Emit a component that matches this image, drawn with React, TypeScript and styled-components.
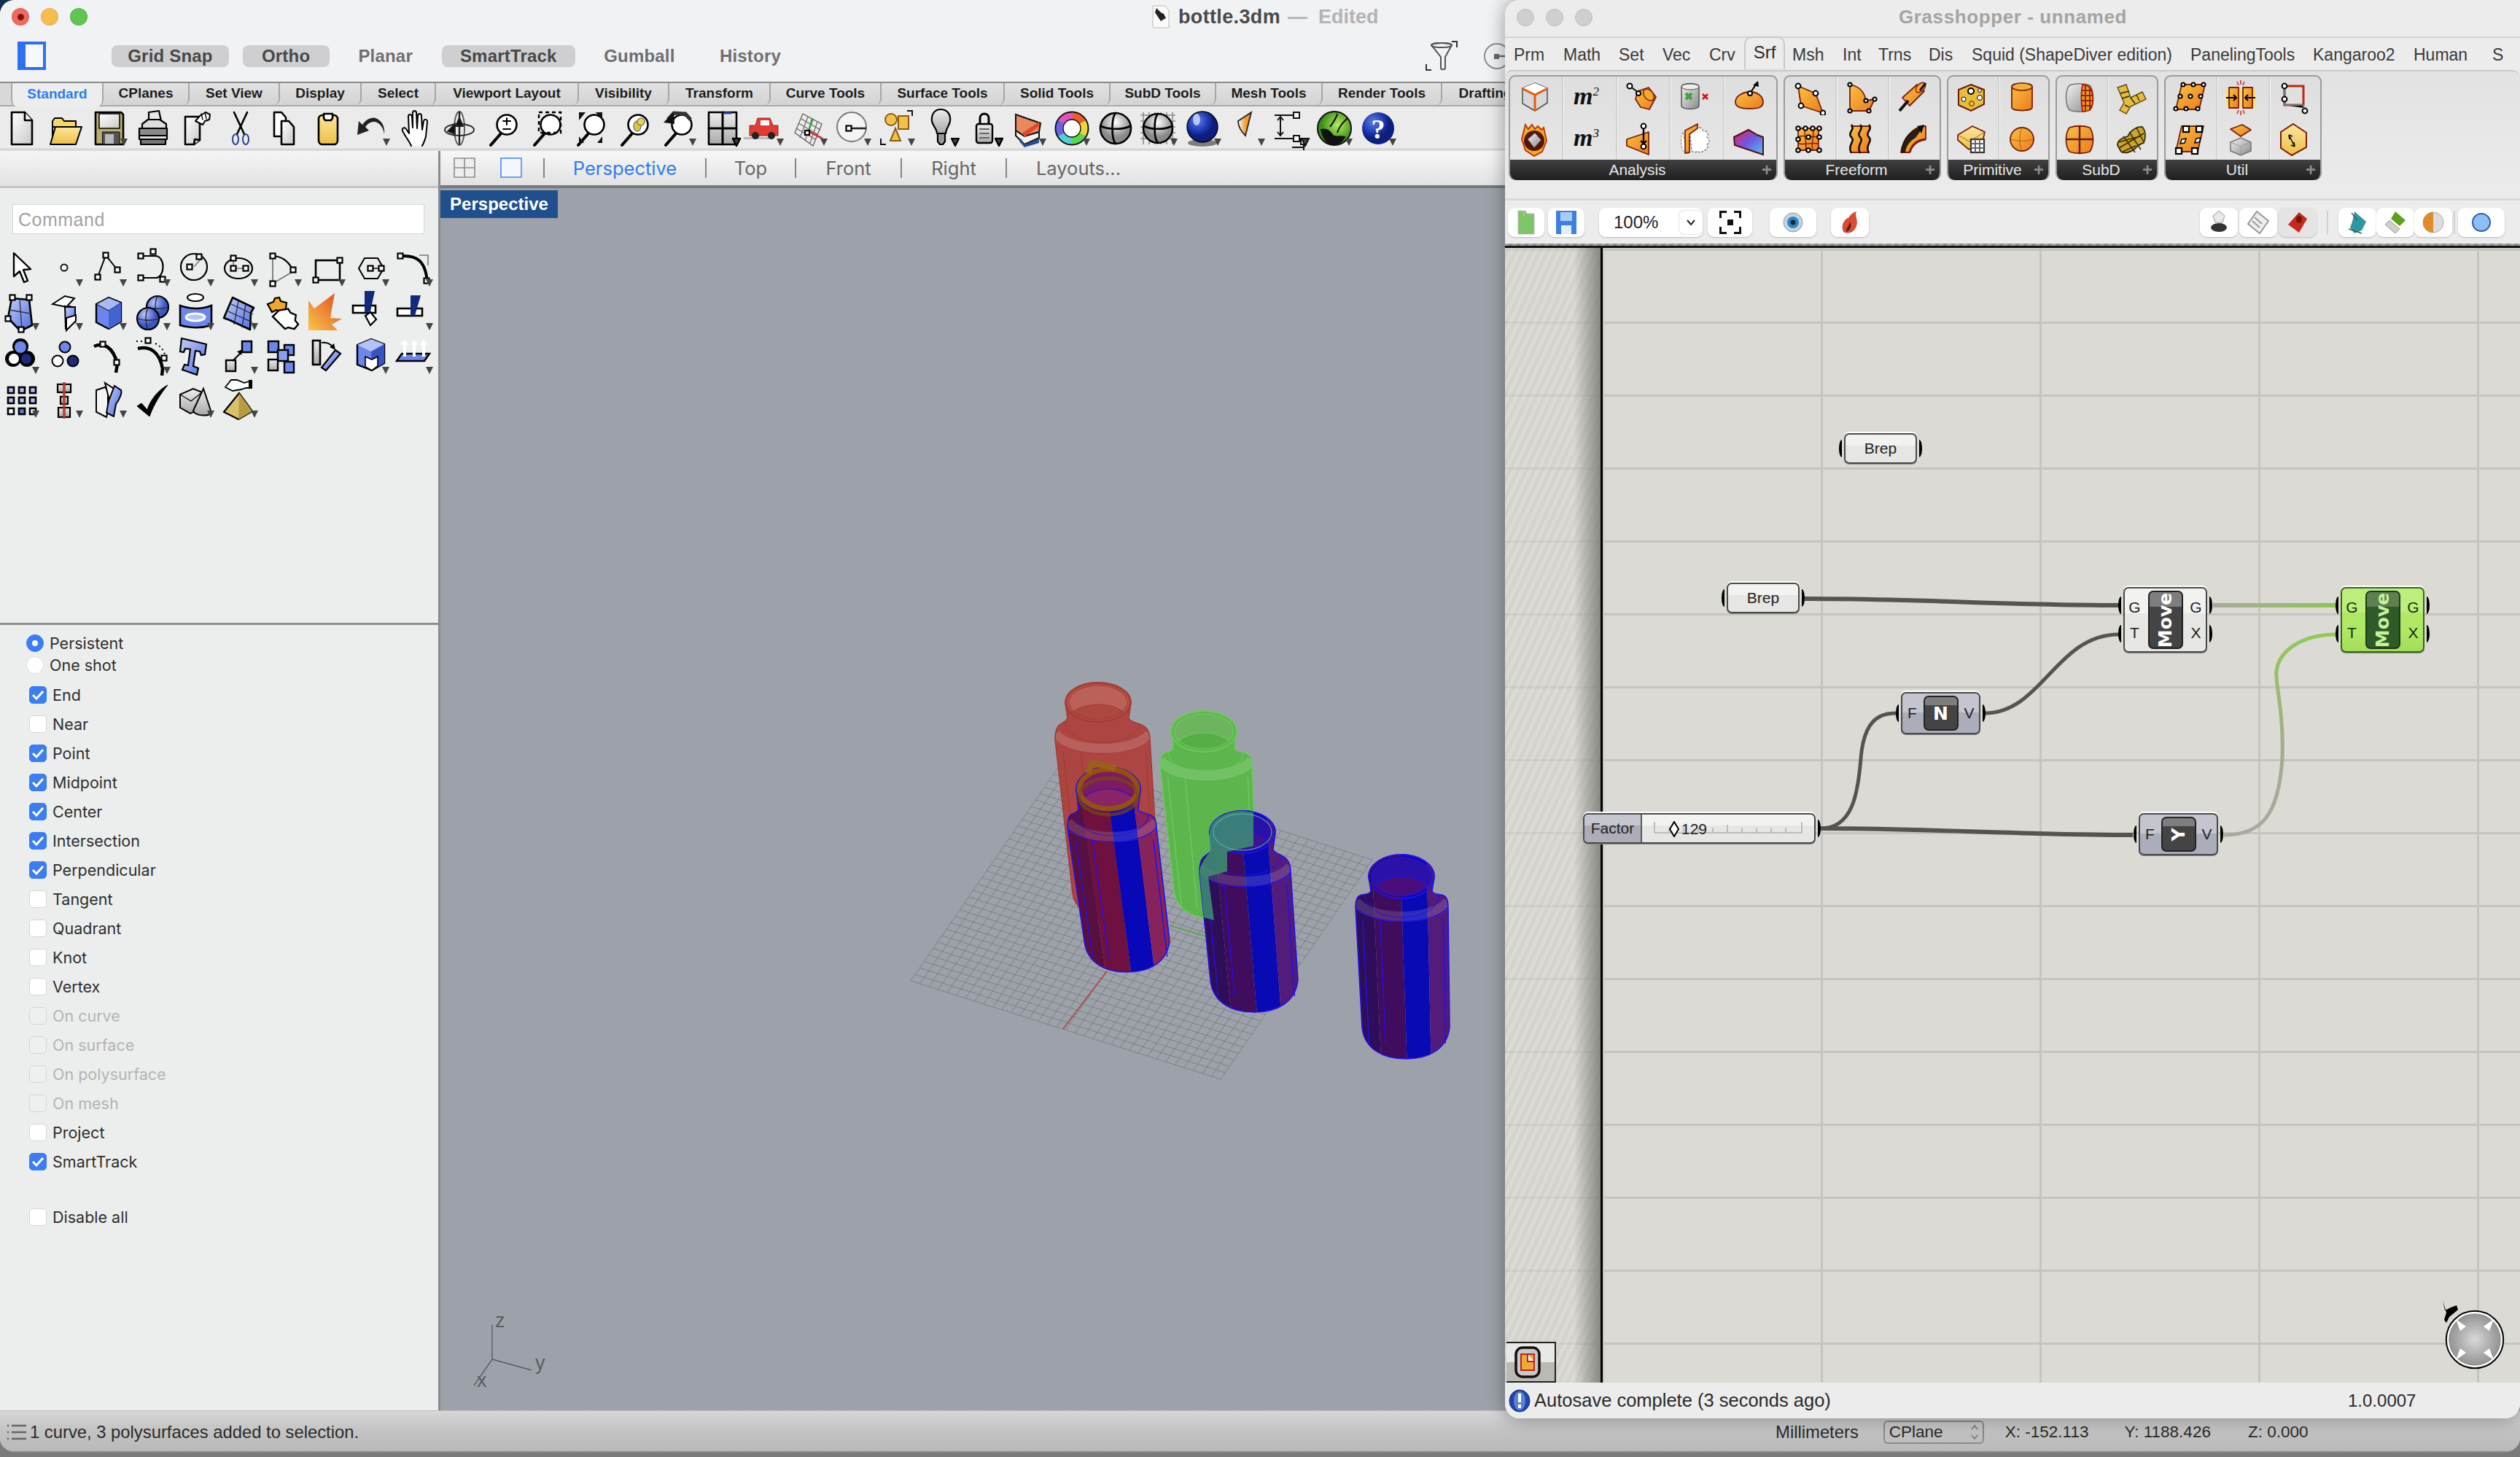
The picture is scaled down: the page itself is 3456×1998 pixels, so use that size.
import React from 'react';
import styled, { createGlobalStyle } from 'styled-components';

const Global = createGlobalStyle`
  html, body { margin: 0; padding: 0; background: #16324f; }
  #root { width: 3456px; height: 1998px; overflow: hidden; position: relative; }
  * { box-sizing: border-box; }
`;

const UI = `"Liberation Sans", Arial, sans-serif`;

const Desktop = styled.div`
  position: relative; width: 3456px; height: 1998px; overflow: hidden; background: linear-gradient(#14304c 0 60px, #7a7a7a 60px); font-family: ${UI}; color: #222;
`;
const RhinoWindow = styled.div`
  width: 3456px; height: 1992px; display: flex; flex-direction: column; background: #f1f2f4; border-radius: 20px 20px 20px 20px; overflow: hidden;
  border-bottom: 2px solid #8a8a8a;
`;
const TitleBar = styled.div`height: 112px; flex: none; display: flex; flex-direction: column; background: #f1f2f4;`;
const TitleTop = styled.div`height: 46px; display: flex; align-items: center; padding-left: 16px;`;
const Light = styled.span<{ $c: string; $b?: string }>`
  width: 24px; height: 24px; border-radius: 50%; background: ${p => p.$c}; margin-right: 16px; border: 1px solid ${p => p.$b || 'rgba(0,0,0,.08)'}; flex: none;
  display: flex; align-items: center; justify-content: center;
`;
const CloseDot = styled.span`width: 9px; height: 9px; border-radius: 50%; background: #7e1510;`;
const DocIcon = styled.svg`margin-left: 1444px; flex: none;`;
const DocName = styled.span`font-size: 27px; font-weight: 700; color: #4a4a4a; margin-left: 12px; letter-spacing: .35px;`;
const DocDash = styled.span`font-size: 27px; font-weight: 700; color: #b3b3b5; margin-left: 10px;`;
const DocState = styled.span`font-size: 27px; font-weight: 700; color: #b3b3b5; margin-left: 15px;`;
const TitleTools = styled.div`height: 39px; margin-top: 11px; display: flex; align-items: center; padding-left: 24px;`;
const SideToggle = styled.div`width: 39px; height: 39px; border: 4px solid #2f6ff0; border-left-width: 11px; flex: none; background: #f7f8fa; margin-right: 90px;`;
const Pill = styled.div<{ $on?: boolean; $w: number }>`
  width: ${p => p.$w}px; height: 30px; margin-right: 18.6px; flex: none; border-radius: 8px; display: flex; align-items: center; justify-content: center;
  font-size: 24px; font-weight: 700; letter-spacing: .2px; color: ${p => p.$on ? '#474747' : '#6f6f70'}; background: ${p => p.$on ? '#cfcfd1' : 'transparent'};
`;
const FilterIcon = styled.svg`margin-left: 843px; flex: none;`;
const SnapIcon = styled.svg`margin-left: 35px; flex: none;`;

const TabStrip = styled.div`height: 34px; flex: none; display: flex; padding-left: 15px; background: #d8d8d9; border-top: 2px solid #8b8b8c; border-bottom: 2px solid #a9a9aa;`;
const Tab = styled.div<{ $w: number; $on?: boolean }>`
  width: ${p => p.$w}px; flex: none; display: flex; align-items: center; justify-content: center; padding-bottom: 2px; font-size: 19px; font-weight: 700; white-space: nowrap;
  color: ${p => p.$on ? '#2c7bf0' : '#1c1c1c'};
  background: ${p => p.$on ? '#ededee' : 'linear-gradient(#e2e2e3,#d3d3d4)'};
  border-right: 2px solid #a7a7a8; border-left: ${p => p.$on ? '2px solid #a7a7a8' : 'none'}; border-radius: 0 0 8px 8px;
  margin-bottom: ${p => p.$on ? '-2px' : '0'};
`;
const IconRow = styled.div`height: 61px; flex: none; display: flex; background: #ebebec; border-bottom: 4px solid #d9d9da; padding-left: 0;`;
const Cell = styled.div`width: 60px; height: 60px; flex: none;`;

const Body = styled.div`flex: 1; min-height: 0; display: flex;`;
const Sidebar = styled.div`width: 604px; flex: none; display: flex; flex-direction: column; background: #eceeed; border-right: 3px solid #8a8b8c;`;
const SideStrip = styled.div`height: 51px; flex: none; background: linear-gradient(#f5f5f5,#e2e2e2); border-bottom: 3px solid #c4c4c4;`;
const SideTop = styled.div`height: 599px; flex: none; padding: 22px 0 0 0; border-bottom: 3px solid #8d8e8f;`;
const Command = styled.div`
  width: 565px; height: 41px; margin-left: 17px; background: #fff; border: 1px solid #d6d6d6; color: #a2a2a2; font-size: 25px; padding: 6px 0 0 7px; font-family: ${UI}; letter-spacing: .5px;
`;
const ToolGrid = styled.div`display: grid; grid-template-columns: repeat(10, 60px); grid-auto-rows: 60px; margin-top: 18px; margin-left: -1px;`;
const Options = styled.div`flex: 1; padding: 10px 0 0 0; font-family: Inter, "Liberation Sans", sans-serif; font-size: 21.5px;`;
const RadioRow = styled.div`height: 30px; display: flex; align-items: center; padding-left: 36px; color: #2e2e2e;`;
const Radio = styled.span<{ $on?: boolean }>`
  width: 24px; height: 24px; border-radius: 50%; flex: none; margin-right: 8px; display: flex; align-items: center; justify-content: center;
  background: ${p => p.$on ? '#3a7df5' : '#fff'}; border: 1px solid ${p => p.$on ? '#3a7df5' : '#dcdcdc'};
  &::after { content: ''; width: 8px; height: 8px; border-radius: 50%; background: ${p => p.$on ? '#fff' : 'transparent'}; }
`;
const CheckList = styled.div`margin-top: 6px;`;
const CheckRow = styled.div<{ $dim?: boolean; $gap?: boolean }>`
  height: 40px; display: flex; align-items: center; padding-left: 40px; color: ${p => p.$dim ? '#b2b4b4' : '#2e2e2e'};
  margin-top: ${p => p.$gap ? '36px' : '0'};
`;
const Box = styled.span<{ $on?: boolean; $dim?: boolean }>`
  width: 24px; height: 24px; border-radius: 5px; flex: none; margin-right: 8px; display: flex; align-items: center; justify-content: center;
  background: ${p => p.$on ? '#3a7df5' : p.$dim ? '#eef0ef' : '#fff'}; border: 1px solid ${p => p.$on ? '#3a7df5' : '#d4d6d6'};
`;

const ViewColumn = styled.div`flex: 1; min-width: 0; display: flex; flex-direction: column;`;
const ViewTabs = styled.div`height: 51px; flex: none; display: flex; align-items: center; background: linear-gradient(#f7f7f7,#e2e2e2); border-bottom: 4px solid #78797b; padding: 0 0 1px 18px;`;
const Sep = styled.span<{ $ml?: number }>`width: 2px; height: 27px; background: #858585; flex: none; margin-left: ${p => p.$ml ?? 0}px;`;
const ViewTab = styled.span<{ $on?: boolean; $w: number }>`
  width: ${p => p.$w}px; flex: none; text-align: center; font-size: 25.5px; font-family: Inter, "Liberation Sans", sans-serif; font-weight: 400; color: ${p => p.$on ? '#2f7cf0' : '#666'};
`;
const ViewIcon = styled.svg<{ $ml?: number }>`flex: none; margin-left: ${p => p.$ml ?? 0}px;`;
const Viewport = styled.div`flex: 1; position: relative; background: #9da1a9; overflow: hidden;`;
const ViewLabel = styled.div`
  position: absolute; left: 0; top: 3px; width: 161px; height: 38px; background: #1f4f8c; color: #fff; font-weight: 700; font-size: 24px; display: flex; align-items: center; justify-content: center;
`;
const Scene = styled.svg`position: absolute; left: 0; top: 0;`;

const StatusBar = styled.div`height: 56px; flex: none; display: flex; align-items: center; background: linear-gradient(#d7d7d7,#c6c6c6 40%,#b8b8b8); border-top: 1px solid #bdbdbd; font-size: 23.8px; color: #2a2a2a; padding: 3px 0 0 10px;`;
const StatusMsg = styled.span`margin-left: 5px;`;
const Units = styled.span`margin-left: 1943px;`;
const PlaneSelect = styled.div`
  width: 138px; height: 32px; margin-left: 34px; border: 2px solid #8a8a8a; border-radius: 6px; display: flex; align-items: center; justify-content: space-between; padding: 0 6px; font-size: 22.5px;
`;
const Coord = styled.span<{ $ml: number }>`margin-left: ${p => p.$ml}px; font-size: 22.5px;`;

/* Grasshopper */
const GHWindow = styled.div`
  position: absolute; left: 2064px; top: 0; width: 1392px; height: 1945px; display: flex; flex-direction: column; background: #ececec; overflow: hidden;
  border-radius: 20px 0 20px 20px; box-shadow: 0 0 26px rgba(0,0,0,.38);
`;
const GHTitle = styled.div`height: 52px; flex: none; display: flex; align-items: center; padding: 0 0 3px 16px; background: #ececec; border-bottom: 2px solid #d4d4d4;`;
const GHName = styled.span`margin-left: 404px; font-size: 26px; font-weight: 700; color: #a4a4a3; letter-spacing: .6px;`;
const GHTabs = styled.div`height: 44px; flex: none; display: flex; align-items: center; position: relative; background: #ececec;`;
const GHTab = styled.span<{ $x: number }>`position: absolute; left: ${p => p.$x}px; margin-top: 2px; font-size: 23px; color: #3a3a3a;`;
const GHActive = styled.span`
  position: absolute; left: 328px; top: -2px; width: 56px; height: 46px; padding-top: 6px; text-align: center; background: #ececec; border: 2px solid #c9c9c9; border-bottom: 2px solid #e4e4e4; border-radius: 10px 10px 0 0; font-size: 24px; color: #2a2a2a; z-index: 2;
`;
const Ribbon = styled.div`height: 176px; flex: none; display: flex; gap: 8px; padding: 5px 0 0 5px; background: linear-gradient(#e2e2e2,#ececec); border-top: 2px solid #c9c9c9; border-radius: 10px 10px 0 0;`;
const Group = styled.div<{ $w: number }>`
  width: ${p => p.$w}px; height: 144px; flex: none; display: flex; flex-direction: column; border-radius: 9px; border: 2px solid #9c9c9c; border-bottom: none; overflow: hidden; background: linear-gradient(#dedede,#e8e8e8);
`;
const GroupGrid = styled.div`height: 114px; flex: none; display: flex;`;
const GroupCol = styled.div`flex: 1; display: flex; flex-direction: column; align-items: center; border-right: 2px solid #d2d2d2; box-shadow: 1px 0 0 #f3f3f3; &:last-child { border-right: none; box-shadow: none; }`;
const RibIcon = styled.svg`flex: none; width: 48px; height: 48px; margin: 5px 5px 4px 0;`;
const GroupCaption = styled.div`
  flex: 1; position: relative; background: linear-gradient(#404040,#1f1f1f); color: #e8e8e8; font-size: 21px; display: flex; align-items: center; justify-content: center; padding-right: 16px; border-radius: 0 0 9px 9px; box-shadow: 0 2px 0 #6a6a6a;
`;
const Plus = styled.span`position: absolute; right: 6px; top: 2px; color: #8c8c8c; font-size: 24px; line-height: 24px; font-weight: 700;`;

const GHBar = styled.div`height: 62px; flex: none; display: flex; align-items: center; padding-left: 4px; background: #ececec; border-top: 3px solid #dadada;`;
const TBtn = styled.div<{ $w: number; $ml?: number; $press?: boolean }>`
  width: ${p => p.$w}px; height: 40px; margin-left: ${p => p.$ml ?? 0}px; flex: none; border-radius: 9px; background: ${p => p.$press ? '#e4e4e4' : '#fff'}; display: flex; align-items: center; justify-content: center;
  box-shadow: 0 1px 2px rgba(0,0,0,.22);
`;
const Combo = styled.div`
  width: 143px; height: 40px; margin-left: 20px; flex: none; border-radius: 9px; background: #fff; display: flex; align-items: center; box-shadow: 0 1px 2px rgba(0,0,0,.22); font-size: 24px; color: #222; padding-left: 20px; position: relative;
`;
const ComboArrow = styled.div`
  position: absolute; right: 1px; top: 4px; width: 32px; height: 32px; background: #fff; border-radius: 7px; box-shadow: 0 0 2px rgba(0,0,0,.35); display: flex; align-items: center; justify-content: center;
`;
const BarSep = styled.span<{ $ml: number; $mr: number }>`width: 2px; height: 32px; background: #cfcfcf; margin: 0 ${p => p.$mr}px 0 ${p => p.$ml}px; flex: none;`;

const Canvas = styled.div`
  flex: 1; min-height: 0; position: relative; overflow: hidden; background-color: #dbdad4;
  background-image: linear-gradient(90deg, #c5c4be 3px, transparent 3px), linear-gradient(#c5c4be 3px, transparent 3px);
  background-size: 300px 100px; background-position: 133px 0, 0 7px;
`;
const Margin = styled.div`
  position: absolute; left: 0; top: 0; bottom: 0; width: 134px;
  background: linear-gradient(90deg, rgba(190,188,182,0) 72%, rgba(120,120,116,.8) 99%), repeating-linear-gradient(115deg, rgba(219,218,212,.55) 0 5px, rgba(206,205,199,.55) 5px 10px);
  border-right: 3px solid #000;
`;
const TopMargin = styled.div`
  position: absolute; left: 0; right: 0; top: 0; height: 6px; background: repeating-linear-gradient(115deg, #a9a8a3 0 5px, #8d8c88 5px 10px); border-bottom: 3px solid #111;
`;
const Wires = styled.svg`position: absolute; left: 0; top: 0;`;
const Node = styled.div<{ $x: number; $y: number; $w: number; $h: number; $kind: 'white' | 'gray' | 'green' }>`
  position: absolute; left: ${p => p.$x - 2064}px; top: ${p => p.$y - 334}px; width: ${p => p.$w}px; height: ${p => p.$h}px; border-radius: 7px; display: flex; align-items: stretch; justify-content: space-between;
  font-size: 21px; color: ${p => p.$kind === 'green' ? '#12300f' : '#222'}; 
  background: ${p => p.$kind === 'green' ? 'linear-gradient(#bdee7c 0 38%,#b0e865 38% 70%,#a2dc58)' : p.$kind === 'gray' ? 'linear-gradient(#c4c5cf 0 48%,#acadba 48% 100%)' : 'linear-gradient(#f2f2f0 0 40%,#e6e6e4 40% 100%)'};
  border: 2px solid ${p => p.$kind === 'green' ? '#37651c' : '#4a4a4a'}; box-shadow: 0 -2px 0 #fff, 0 1px 0 #888;
`;
const Ports = styled.div`width: 27px; display: flex; flex-direction: column; justify-content: space-around; align-items: center; flex: none; padding: 8px 0;`;
const Capsule = styled.div<{ $green?: boolean }>`
  width: 48px; margin: 3px 0; flex: none; border-radius: 7px; display: flex; align-items: center; justify-content: center; overflow: hidden;
  background: ${p => p.$green ? 'linear-gradient(#5d7f52 0 26%,#2f5a2a 26% 100%)' : 'linear-gradient(#7e7e7e 0 26%,#444 26% 100%)'};
  border: 2px solid ${p => p.$green ? '#1c3a16' : '#222'};
  color: ${p => p.$green ? '#c8f29a' : '#fff'}; font-weight: 700;
`;
const MoveText = styled.span`display: block; transform: rotate(-90deg); font-size: 25px; font-family: "DejaVu Sans", sans-serif; font-weight: 700;`;
const LetterText = styled.span`font-size: 25px; font-family: "DejaVu Sans", sans-serif; font-weight: 700;`;
const LetterTurn = styled(LetterText)`transform: rotate(-90deg);`;
const Grip = styled.span<{ $side: 'l' | 'r'; $y: string }>`
  position: absolute; ${p => p.$side === 'l' ? 'left: -9px; border-left: 4px solid #000;' : 'right: -9px; border-right: 4px solid #000;'}
  top: ${p => p.$y}; width: 8px; height: 24px; margin-top: -12px; border-radius: 50%;
`;
const ParamLabel = styled.span`flex: 1; display: flex; align-items: center; justify-content: center;`;
const SliderLabel = styled.span`width: 79px; flex: none; background: linear-gradient(#c5c6d0 0 40%,#acadb9 40% 100%); border-right: 2px solid #5a5a5a; border-radius: 5px 0 0 5px; display: flex; align-items: center; justify-content: center;`;
const SliderTrack = styled.span`flex: 1; position: relative;`;
const SliderValue = styled.span`position: absolute; left: 37px; top: 8px; display: flex; align-items: center; gap: 3px; font-size: 21px;`;
const Ticks = styled.svg`position: absolute; left: 16px; top: 10px;`;

const GHStatus = styled.div`height: 49px; flex: none; display: flex; align-items: center; padding-left: 5px; background: #ececec; font-size: 25.5px; color: #2a2a2a; position: relative;`;
const GHMessage = styled.span`margin-left: 5px;`;
const GHVersion = styled.span`position: absolute; left: 1156px; font-size: 24px;`;
const Widget = styled.div`position: absolute; left: 2px; bottom: 0; width: 68px; height: 56px; background: linear-gradient(#e8e8e6 0 50%,#b9b9b6 50%); border: 2px solid #222; border-left: none; display: flex; align-items: center; justify-content: center; padding-right: 8px;`;
const Compass = styled.svg`position: absolute; left: 1280px; bottom: 15px;`;

const Defs = styled.svg`position: absolute; width: 0; height: 0;`;

/* ------- icon helpers ------- */
const Tri = () => <polygon points="45,44 55,44 50,54" fill="#444" />;
const S = { stroke: '#000', strokeWidth: 2.6, strokeLinejoin: 'round' as const, strokeLinecap: 'round' as const };
const Sq = ({ x, y, s = 8, f = '#fff' }: { x: number; y: number; s?: number; f?: string }) => <rect x={x - s / 2} y={y - s / 2} width={s} height={s} fill={f} stroke="#000" strokeWidth={2.2} />;
const Mag = ({ children, f = '#fff' }: { children?: React.ReactNode; f?: string }) => (
  <g {...S}>
    <line x1="27" y1="37" x2="13" y2="53" strokeWidth="4" />
    <circle cx="35" cy="25" r="13.5" fill={f} />
    {children}
  </g>
);
const ringColors = ['#ee5a28', '#ecd832', '#58d94a', '#4fd0d8', '#6a62e6', '#dd55b8'];

const topIcons: React.ReactNode[] = [
  <g {...S}><path d="M16 8h18l10 11v33H16z" fill="url(#gW)" /><path d="M34 8v11h10" fill="#fff" /></g>,
  <g {...S} strokeWidth="2"><path d="M12 44V20l3-4h10l3 4h16v8H12z" fill="#f4d766" /><path d="M9 52l7-24h36l-8 24z" fill="url(#gY)" /></g>,
  <g {...S}><path d="M11 8h35l3 3v41H11z" fill="#b8ac6e" /><rect x="16" y="10" width="28" height="20" fill="url(#gW)" strokeWidth="1.5" /><rect x="21" y="35" width="23" height="17" fill="#555" strokeWidth="1" /><rect x="24" y="38" width="12" height="13" fill="#bbb" strokeWidth="0" /><polygon points="45,44 55,44 50,54" fill="#444" stroke="none" /></g>,
  <g {...S} strokeWidth="2.2"><path d="M24 8l14-2 3 14H24z" fill="#e8e8e8" /><path d="M15 24l8-6h16l9 6v6H15z" fill="#ddd" /><rect x="11" y="30" width="38" height="10" fill="#8a8a8a" /><rect x="11" y="40" width="38" height="5" fill="#ddd" /><rect x="13" y="45" width="34" height="7" fill="#777" /></g>,
  <g {...S}><path d="M14 14h20v32l-8 6H14z" fill="url(#gW)" /><path d="M26 52l1-7 7 1" fill="#ddd" /><path d="M28 20l6-7 8-5 6 3-1 7-6 2-3 5z" fill="#fff" strokeWidth="2" /><path d="M36 10l2 8M41 8l2 9" strokeWidth="1.4" /></g>,
  <g><g {...S} strokeWidth="2.6"><line x1="21" y1="8" x2="35" y2="38" /><line x1="39" y1="8" x2="25" y2="38" /></g><ellipse cx="23" cy="45" rx="4" ry="7" fill="none" stroke="#2b3f8f" strokeWidth="2" /><ellipse cx="37" cy="45" rx="4" ry="7" fill="none" stroke="#2b3f8f" strokeWidth="2" /></g>,
  <g {...S}><path d="M16 8h10l6 7v26H16z" fill="#fff" /><path d="M26 20h10l7 8v24H26z" fill="url(#gW)" /></g>,
  <g {...S}><rect x="17" y="12" width="26" height="40" rx="5" fill="url(#gY)" /><path d="M24 10h12v6l-2 3h-8l-2-3z" fill="#fff" /></g>,
  <g><path d="M47 38c-1-9-7-17-14-17-5 0-9 3-12 7l5 5-16 6 2-19 5 5c4-6 11-11 18-9 9 3 13 12 12 22z" fill="#222" /><Tri /></g>,
  <path {...S} strokeWidth="2" fill="#fff" d="M24 54c-3-7-11-17-12-21-1-4 3-5 5-2l4 6-1-23c0-4 4-4 5 0l1 15V9c0-4 5-4 5 0l1 21 1-17c0-4 5-4 5 0l1 19 2-12c1-3 5-3 5 1l-2 20c-1 5-3 9-5 13" />,
  <g fill="none" stroke="#222" strokeWidth="1.8"><ellipse cx="30" cy="30" rx="7" ry="23" stroke="#555" /><ellipse cx="30" cy="32" rx="20" ry="8" /><line x1="30" y1="7" x2="30" y2="52" strokeWidth="2.4" /><polygon points="30,15 25,27 35,27" fill="#111" /><polygon points="24,24 14,34 24,38" fill="#111" /></g>,
  <Mag><path d="M35 16v9M30 20h10M30 31h10" strokeWidth="2" /></Mag>,
  <g><Mag /><rect x="19" y="8" width="30" height="28" fill="none" stroke="#000" strokeWidth="2.4" strokeDasharray="5 4" /></g>,
  <g><Mag /><path d="M14 8h9l-9 11zM46 8h-9l9 11zM14 50v-9l7 9zM46 50v-9l-7 9z" fill="#111" /></g>,
  <Mag><ellipse cx="34" cy="27" rx="5" ry="7" fill="#d8c93c" stroke="#777" strokeWidth="1.4" /><circle cx="39" cy="21" r="5" fill="#e7d74a" stroke="#777" strokeWidth="1.4" /></Mag>,
  <g><Mag f="#fff" /><path d="M16 18l8-9 16 1 7 8" fill="none" stroke="#333" strokeWidth="5" /><polygon points="10,22 24,8 25,24" fill="#111" /><Tri /></g>,
  <g {...S}><rect x="12" y="8" width="38" height="44" fill="url(#gG)" /><path d="M31 8v44M12 30h38" strokeWidth="3" /><path d="M34 9h8" stroke="#2c3f95" strokeWidth="3" /><Tri /></g>,
  <g><rect x="-4" y="42" width="44" height="3" fill="#b8b8b8" /><path d="M8 26h8l3-10h17l4 10h7v14H8z" fill="#e23b35" stroke="#a51c18" strokeWidth="1" /><rect x="23" y="19" width="12" height="7" fill="#fff" /><circle cx="16" cy="40" r="5" fill="#222" /><circle cx="38" cy="40" r="5" fill="#222" /><Tri /></g>,
  <g><path d="M21 10l26 14-12 30L10 36z" fill="#ececec" stroke="#555" strokeWidth="1.2" /><path d="M15 23l26 15M19 17l26 15M12 30l26 15M28 14L17 43M35 18L24 47M41 21L31 50" stroke="#666" strokeWidth="1.2" fill="none" /><line x1="29" y1="34" x2="34" y2="16" stroke="#3aa23a" strokeWidth="2.5" /><line x1="29" y1="34" x2="48" y2="44" stroke="#d33" strokeWidth="3" /><Sq x={27} y={36} s={6} /><Tri /></g>,
  <g><circle cx="28" cy="28" r="20" fill="#f4f4f4" stroke="#777" strokeWidth="2" /><line x1="27" y1="30" x2="48" y2="30" stroke="#222" strokeWidth="2.6" /><Sq x={24} y={30} s={7} /><Tri /></g>,
  <g><circle cx="22" cy="18" r="8" fill="#f2c247" stroke="#8c5a12" strokeWidth="2" /><rect x="32" y="13" width="14" height="18" fill="#f2c247" stroke="#8c5a12" strokeWidth="2" /><path d="M28 30l7 17H21z" fill="#f2c247" stroke="#8c5a12" strokeWidth="2" /><path d="M44 6h7v7M8 44v8h7" fill="none" stroke="#111" strokeWidth="2" /><Tri /></g>,
  <g {...S} strokeWidth="2.2"><path d="M30 4c10 0 14 8 13 16-1 7-6 10-6 17H25c0-7-6-10-7-17-1-8 3-16 12-16z" fill="url(#gG)" /><path d="M26 37h10v11l-3 4h-4l-3-4z" fill="#999" /><Tri /></g>,
  <g {...S} strokeWidth="2.4"><path d="M24 24v-8c0-8 12-8 12 0v8" fill="none" strokeWidth="3" /><rect x="19" y="24" width="22" height="26" rx="3" fill="url(#gG)" /><path d="M24 31h12M24 37h12M24 43h12" stroke="#666" strokeWidth="2" /><Tri /></g>,
  <g><path d="M13 11l34 12-2 12-20 6-12-8z" fill="#e98a5e" stroke="#111" strokeWidth="2" /><path d="M13 33l12 8 20-6v8L25 52 13 40z" fill="#f2f2f2" stroke="#111" strokeWidth="2" /><path d="M22 36l23-15v6L25 42z" fill="#e0492d" /><path d="M20 44l5 8 20-8v6l-20 6-7-8z" fill="#2b4a8f" /><Tri /></g>,
  <g>{ringColors.map((c, i) => <circle key={c} cx="30" cy="30" r="17" fill="none" stroke={c} strokeWidth="10" pathLength={6} strokeDasharray="1.05 4.95" strokeDashoffset={1.5 - i} />)}<circle cx="30" cy="30" r="22.5" fill="none" stroke="#111" strokeWidth="2" /><circle cx="30" cy="30" r="12" fill="#fff" stroke="#111" strokeWidth="1.4" /><Tri /></g>,
  <g {...S}><circle cx="30" cy="30" r="21" fill="url(#gBall)" /><path d="M30 9c-6 6-6 36 0 42M10 27c10 5 30 5 40 0" fill="none" /></g>,
  <g><path d="M8 8v44M16 8v44M24 8v44M32 8v44M40 8v44M48 8v44M4 12h48M4 20h48M4 28h48M4 36h48M4 44h48" stroke="#8a8a8a" strokeWidth="1.6" fill="none" /><g {...S}><circle cx="28" cy="30" r="20" fill="url(#gBall)" /><path d="M28 10c-6 6-6 34 0 40M9 27c10 5 28 5 38 0" fill="none" /></g><Tri /></g>,
  <g><ellipse cx="29" cy="50" rx="20" ry="5" fill="#333" opacity=".6" /><circle cx="29" cy="28" r="21" fill="url(#gBlue)" stroke="#000" strokeWidth="1.4" /><ellipse cx="21" cy="18" rx="5" ry="8" fill="#c8d7ff" opacity=".85" /><Tri /></g>,
  <g><path d="M36 8L18 20c0 8 4 14 10 20z" fill="url(#gCone)" stroke="#222" strokeWidth="1.8" /><Tri /></g>,
  <g fill="none" stroke="#111" strokeWidth="2"><path d="M8 12h26M8 44h26M16 14v26" /><path d="M12 19l4-5 4 5M12 35l4 5 4-5" /><rect x="34" y="8" width="8" height="8" fill="#fff" /><rect x="34" y="40" width="8" height="8" fill="#fff" /><rect x="44" y="44" width="7" height="8" fill="#fff" /><path d="M48 52v10M32 56h16" /><Tri /></g>,
  <g><circle cx="30" cy="30" r="23" fill="url(#gGlobe)" stroke="#111" strokeWidth="2" /><path d="M12 32c8-2 12 2 16 8 4 3 10 0 16 2-4 7-10 10-15 10-8 0-14-8-17-20zM34 10c-2 8-6 12-10 18" fill="#111" stroke="#111" strokeWidth="2" /><path d="M48 16c-6 6-12 12-14 20" stroke="#111" fill="none" strokeWidth="2" /><Tri /></g>,
  <g><circle cx="30" cy="30" r="22" fill="url(#gBlue)" /><text x="30" y="44" textAnchor="middle" fontFamily='"Liberation Serif", serif' fontSize="38" fontWeight="700" fill="#fff">?</text><Tri /></g>,
];

const B = (d: string) => <path d={d} fill="url(#gBl)" stroke="#000" strokeWidth="2.6" strokeLinejoin="round" />;
const toolIcons: React.ReactNode[] = [
  <path d="M20 8l0 32 8-7 6 15 5-2-6-15 10-1z" fill="#fff" stroke="#000" strokeWidth="2.4" strokeLinejoin="round" />,
  <g><circle cx="29" cy="28" r="4.5" fill="#fff" stroke="#111" strokeWidth="2" /><Tri /></g>,
  <g><path d="M15 41L26 11l16 20" fill="none" stroke="#000" strokeWidth="2" /><Sq x={15} y={41} s={7} /><Sq x={26} y={11} s={7} /><Sq x={42} y={31} s={7} /><Tri /></g>,
  <g><path d="M14 12h20c14 0 14 30 0 30H14" fill="none" stroke="#000" strokeWidth="2.2" /><Sq x={14} y={12} s={7} /><Sq x={14} y={42} s={7} /><Sq x={31} y={6} s={7} /><Sq x={44} y={44} s={7} /><Tri /></g>,
  <g><circle cx="27" cy="27" r="18" fill="none" stroke="#000" strokeWidth="2.2" /><line x1="27" y1="27" x2="40" y2="12" stroke="#777" strokeWidth="1.5" /><Sq x={21} y={27} s={7} /><Sq x={34} y={13} s={7} /><Tri /></g>,
  <g><ellipse cx="28" cy="29" rx="19" ry="14" fill="none" stroke="#000" strokeWidth="2.2" /><path d="M21 14v15h17" stroke="#777" strokeWidth="1.5" fill="none" /><Sq x={21} y={15} s={7} /><Sq x={21} y={29} s={7} /><Sq x={38} y={29} s={7} /><Tri /></g>,
  <g><path d="M15 12v38l28-17" fill="none" stroke="#777" strokeWidth="1.8" /><path d="M15 12c14 0 24 10 28 21" fill="none" stroke="#000" strokeWidth="2.2" /><Sq x={15} y={12} s={7} /><Sq x={15} y={50} s={7} /><Sq x={43} y={31} s={7} /><Tri /></g>,
  <g><rect x="14" y="18" width="33" height="27" fill="none" stroke="#000" strokeWidth="2.6" /><Sq x={14} y={45} s={7} /><Sq x={47} y={18} s={7} /><Tri /></g>,
  <g><path d="M13 29l8-14h18l8 14-8 14H21z" fill="none" stroke="#000" strokeWidth="2" /><line x1="29" y1="29" x2="44" y2="29" stroke="#000" strokeWidth="1.4" /><Sq x={29} y={29} s={7} /><Sq x={44} y={29} s={7} /><Tri /></g>,
  <g><path d="M36 11h12v14" stroke="#777" strokeWidth="1.6" fill="none" /><path d="M12 12c20-1 33 6 35 37" fill="none" stroke="#000" strokeWidth="4" /><Sq x={10} y={12} s={7} /><Sq x={46} y={46} s={7} /><Tri /></g>,

  <g>{B('M17 10l24 2 4 35-16 8L12 37z')}<path d="M14 26l29 5M28 11l3 42" stroke="#334" strokeWidth="1.4" /><Sq x={18} y={9} s={7} /><Sq x={41} y={9} s={7} /><Sq x={12} y={38} s={7} /><Sq x={30} y={53} s={7} /><Tri /></g>,
  <g><path d="M13 18l17-11 13 3-11 12z" fill="#fff" stroke="#000" strokeWidth="2" /><path d="M32 22c8-4 13 4 12 20L33 28z" fill="url(#gBl)" stroke="#000" strokeWidth="2" /><path d="M32 22l-2-1 1 30 13-11V22z" fill="url(#gBl)" stroke="#000" strokeWidth="2" /><path d="M32 37v17l13-13v-8z" fill="#fff" stroke="#000" strokeWidth="2" /><Tri /></g>,
  <g><path d="M13 18l17-9 17 7v26L30 52 13 43z" fill="#6c86ec" stroke="#000" strokeWidth="2.4" /><path d="M13 18l17 9 17-11-17-7z" fill="#a8b9f4" stroke="#000" strokeWidth="1" /><path d="M30 27l17-11v26L30 52z" fill="#4462d0" /><Tri /></g>,
  <g><circle cx="37" cy="22" r="15" fill="url(#gSph)" stroke="#000" strokeWidth="2.2" /><path d="M37 7c-4 8-4 22 0 30M23 22c8 3 20 3 29 0" stroke="#223" strokeWidth="1.3" fill="none" /><circle cx="24" cy="38" r="15" fill="url(#gSph)" stroke="#000" strokeWidth="2.2" /><path d="M24 23c-4 8-4 22 0 30M10 38c8 3 20 3 29 0" stroke="#223" strokeWidth="1.3" fill="none" /><Tri /></g>,
  <g><ellipse cx="29" cy="9" rx="11" ry="5" fill="#fff" stroke="#000" strokeWidth="2" /><path d="M8 20c14 5 30 5 43 0v27c-13 4-29 4-43 0z" fill="#6c86ec" stroke="#000" strokeWidth="2.6" /><ellipse cx="29" cy="36" rx="13" ry="5" fill="#b8c4f5" stroke="#fff" strokeWidth="3" /><Tri /></g>,
  <g>{B('M20 9l29 14-4 7-1 23-28-13-8-3z')}<path d="M14 28l33 15M18 18l30 14M28 14L22 46M38 18L33 50" stroke="#223" strokeWidth="1.3" /><Tri /></g>,
  <g><path d="M8 18l8-3 2-5 6-1 2 5 8 2-1 8-7 6-6-4-6 3z" fill="#f0a828" stroke="#000" strokeWidth="2.2" /><path d="M17 36l8-8 12-2 3 5 7 3-1 7 4 5-5 6-8-2-4 2-8-8z" fill="#fff" stroke="#000" strokeWidth="2.2" transform="translate(-3 -3) scale(1.06)" /></g>,
  <path d="M0 48V12l8 11L36 2 30 36l16 1-14 8 8 8H0z" fill="url(#gFire)" transform="translate(4 1)" />,
  <g><rect x="5" y="20" width="31" height="10" fill="#fff" stroke="#000" strokeWidth="2.6" /><path d="M21 0h14l-6 28-8 2z" fill="#13297a" /><path d="M22 34l7-5 8 10-8 8z" fill="#fff" stroke="#000" strokeWidth="2.2" /></g>,
  <g><rect x="6" y="24" width="34" height="10" fill="#fff" stroke="#000" strokeWidth="2.6" /><path d="M24 6h14l-8 28h-6z" fill="#13297a" /><Tri /></g>,

  <g><circle cx="29" cy="16" r="11" fill="#000" /><circle cx="19" cy="33" r="11" fill="#000" /><circle cx="38" cy="33" r="11" fill="#000" /><circle cx="29" cy="17" r="8" fill="#6c86ec" /><circle cx="20" cy="33" r="7" fill="#fff" /><circle cx="37" cy="33" r="7" fill="#1a2c78" /><Tri /></g>,
  <g><circle cx="30" cy="17" r="7.5" fill="#6c86ec" stroke="#000" strokeWidth="2" /><circle cx="20" cy="36" r="7.5" fill="#fff" stroke="#000" strokeWidth="2" /><circle cx="41" cy="36" r="7.5" fill="#1a2c78" stroke="#000" strokeWidth="2" /></g>,
  <g><path d="M10 16c12-6 26 0 32 24l-2 12" fill="none" stroke="#000" strokeWidth="4.5" /><Sq x={22} y={13} s={7} /><Sq x={41} y={38} s={7} /></g>,
  <g><path d="M10 19c16-4 30 4 34 28l-1 9" fill="none" stroke="#000" strokeWidth="4.5" /><path d="M8 9h10M34 12c8 4 12 10 14 18" stroke="#000" strokeWidth="2" strokeDasharray="2 4" fill="none" /><Sq x={24} y={8} s={7} /><Sq x={46} y={32} s={7} /><Tri /></g>,
  <g><path d="M10 5l34 8-2 14-5 1-2-5-6-1-3 21 7 3-2 9-20-7 3-7 5 1 3-22-7-1-2 5-5-1z" fill="url(#gBl)" stroke="#000" strokeWidth="2.2" /></g>,
  <g><rect x="11" y="35" width="13" height="15" fill="url(#gG)" stroke="#000" strokeWidth="2.4" /><rect x="33" y="9" width="13" height="15" fill="#6c86ec" stroke="#000" strokeWidth="2.4" /><line x1="20" y1="36" x2="32" y2="24" stroke="#000" strokeWidth="2.2" /><polygon points="34,20 26,23 32,28" fill="#000" /><Tri /></g>,
  <g><rect x="9" y="9" width="14" height="15" fill="#6c86ec" stroke="#000" strokeWidth="2.4" /><rect x="31" y="14" width="13" height="14" fill="#6c86ec" stroke="#000" strokeWidth="2.4" /><rect x="22" y="21" width="14" height="15" fill="#8a9ff0" stroke="#000" strokeWidth="2.4" /><rect x="9" y="34" width="13" height="15" fill="url(#gG)" stroke="#000" strokeWidth="2.4" /><rect x="31" y="37" width="13" height="15" fill="#6c86ec" stroke="#000" strokeWidth="2.4" /></g>,
  <g><rect x="10" y="8" width="10" height="33" fill="url(#gG)" stroke="#000" strokeWidth="2.6" /><path d="M28 49l-6-4 19-24 7 5z" fill="url(#gBl)" stroke="#000" strokeWidth="2.2" /><path d="M22 11c6-1 13 1 16 7" fill="none" stroke="#000" strokeWidth="2" /><polygon points="41,21 33,17 39,12" fill="#000" /></g>,
  <g><path d="M11 14l19-8 18 7v26L31 49 11 41z" fill="#6c86ec" stroke="#000" strokeWidth="2.4" /><path d="M11 14l19 9 18-10-18-7z" fill="#b6c2f5" /><path d="M30 23l18-10v26L31 49z" fill="#3752c4" /><path d="M22 30l9 4 8-4v13l-8 6-9-5z" fill="#fff" stroke="#000" strokeWidth="1.6" /><Tri /></g>,
  <g><path d="M5 36l7-10h38l-7 10z" fill="#6c86ec" stroke="#000" strokeWidth="2.4" /><g fill="#fff"><path d="M14 30V14h-4l6-7 6 7h-4v16zM27 30V14h-4l6-7 6 7h-4v16zM40 30V14h-4l6-7 6 7h-4v16z" /></g><Tri /></g>,

  <g><g fill="#b4c0f5" stroke="#000" strokeWidth="2.6"><rect x="12" y="12" width="8" height="8" /><rect x="27" y="12" width="8" height="8" /><rect x="42" y="12" width="8" height="8" /><rect x="12" y="26" width="8" height="8" /><rect x="27" y="26" width="8" height="8" /><rect x="42" y="26" width="8" height="8" /><rect x="12" y="41" width="8" height="8" fill="#fff" /><rect x="27" y="41" width="8" height="8" fill="#5f7de8" /><rect x="42" y="41" width="8" height="8" fill="#fff" /></g><Tri /></g>,
  <g><rect x="20" y="8" width="18" height="11" fill="url(#gG)" stroke="#000" strokeWidth="2.2" /><rect x="24" y="25" width="10" height="10" fill="url(#gG)" stroke="#000" strokeWidth="2.2" /><rect x="21" y="40" width="16" height="13" fill="url(#gG)" stroke="#000" strokeWidth="2.2" /><rect x="27" y="5" width="4" height="50" fill="#b9342a" opacity=".85" /><Tri /></g>,
  <g><path d="M13 16l12-4 4 5v28L27 53 13 46z" fill="#f4f4f4" stroke="#000" strokeWidth="2" /><path d="M25 6l12 8-6 16z" fill="#fff" stroke="#000" strokeWidth="2" /><path d="M38 10l9 6c2 4-3 14-7 19l-3 17-10-5 3-16z" fill="url(#gBl)" stroke="#000" strokeWidth="2" /><Tri /></g>,
  <path d="M8 35l6-4 8 9C26 26 38 12 50 6c-9 11-19 26-25 43z" fill="#000" stroke="#000" strokeWidth="1" transform="translate(1 3)" />,
  <g><path d="M8 22l18-8 12 5v22L22 48 8 40z" fill="url(#gG)" stroke="#000" strokeWidth="2" /><path d="M8 22l15 9 15-12" fill="none" stroke="#000" strokeWidth="1.2" /><path d="M40 14L26 44c2 7 20 9 25 3z" fill="url(#gG)" stroke="#000" strokeWidth="2" /><Tri /></g>,
  <g><path d="M10 12l8-10 8 0 10 4 10-3v10h-8l-6 2-12 2z" fill="#fff" stroke="#000" strokeWidth="1.8" /><path d="M42 2h5v12h-5z" fill="#000" /><path d="M29 20L8 46l20 10 19-11z" fill="#d9c06a" stroke="#000" strokeWidth="2.2" /><path d="M29 20l-1 36 19-11z" fill="#b89c42" /><Tri /></g>,
];

const O = { fill: 'url(#gO)', stroke: '#7a2008', strokeWidth: 1.8, strokeLinejoin: 'round' as const };
const D = ({ x, y, r = 3.4 }: { x: number; y: number; r?: number }) => <circle cx={x} cy={y} r={r} fill="#fff" stroke="#000" strokeWidth="2" />;
const Wd = ({ x, y }: { x: number; y: number }) => <rect x={x - 4} y={y - 4} width="8" height="8" fill="#fff" stroke="#000" strokeWidth="2.2" />;
const MText = ({ n }: { n: string }) => (
  <text x="4" y="33" fontFamily='"Liberation Serif", serif' fontStyle="italic" fontWeight="700" fontSize="34" fill="#111">m<tspan dy="-12" fontSize="17" fontWeight="400">{n}</tspan></text>
);

const analysis: React.ReactNode[][] = [
  [<g><path d="M25 4l17 7v20L25 42 8 32V11z" fill="#d8d8d8" stroke="#555" strokeWidth="1.6" /><path d="M8 11l17-7 17 7-17 9z" fill="#fff" /><path d="M7 11l18 9 18-9M25 20v22" fill="none" stroke="#e65a12" strokeWidth="3" /></g>,
   <g><path d="M12 4l4 6 5-6 4 6 4-4 5 5 3-3 2 9 2 9-6 15-11 6-12-8-5-15z" fill="#f6b21b" stroke="#c23a0c" strokeWidth="2" /><circle cx="24" cy="26" r="14" fill="#571408" /><path d="M15 24l10-9 9 10-10 11z" fill="url(#gSilver)" stroke="#333" /></g>],
  [<MText n="2" />, <MText n="3" />],
  [<g><path d="M19 15l15-5 10 13-9 17-12-3-7-11z" {...O} /><ellipse cx="34" cy="20" rx="6" ry="9" fill="#f5a830" stroke="#7a2008" strokeWidth="1.4" transform="rotate(-40 34 20)" /><line x1="8" y1="8" x2="20" y2="17" stroke="#111" strokeWidth="2" /><D x={8} y={8} r={3.5} /><D x={20} y={18} r={3} /></g>,
   <g><path d="M4 24l30-10v31L4 33z" {...O} /><line x1="27" y1="6" x2="27" y2="34" stroke="#000" strokeWidth="2.4" /><path d="M23 26l4 4 4-4" fill="none" stroke="#000" strokeWidth="2" /><D x={27} y={6} /><D x={27} y={34} /></g>],
  [<g><path d="M6 9c0-6 24-6 24 0v26c0 6-24 6-24 0z" fill="url(#gSilver)" stroke="#555" strokeWidth="1.5" /><ellipse cx="18" cy="9" rx="12" ry="4" fill="#ececec" stroke="#555" /><path d="M12 18l8 8M20 18l-8 8" stroke="#41a040" strokeWidth="4" /><path d="M35 19l7 7M42 19l-7 7" stroke="#c81818" strokeWidth="2.6" /></g>,
   <g><path d="M30 8c5 0 4 5 8 5 5 0 5 5 3 8 4 3 4 8 0 10 2 4 0 8-4 8-2 3-7 4-9 1-3 3-7 2-8-1l-3-27z" fill="#fff" stroke="#777" strokeWidth="1.4" strokeDasharray="3 2" /><path d="M8 14c-3 3-4 20 1 27h4z" fill="#fff" stroke="#777" strokeDasharray="3 2" /><path d="M11 12L28 3v6L17 17v25l-6 1z" {...O} /></g>],
  [<g><path d="M6 30c0-8 10-14 20-14s18 6 18 14-8 9-19 9-19-2-19-9z" {...O} /><line x1="26" y1="18" x2="36" y2="3" stroke="#000" strokeWidth="2.2" /><polygon points="37,1 30,7 38,9" fill="#000" /><D x={26} y={18} r={3} /></g>,
   <path d="M4 23l20-10 12 7 8 3v24L5 34z" fill="url(#gVis)" stroke="#551010" strokeWidth="2" transform="translate(0 -2)" />],
];
const freeform: React.ReactNode[][] = [
  [<g><path d="M10 8l24 10 10 27-30-10z" {...O} /><D x={10} y={8} /><D x={34} y={18} /><D x={14} y={35} /><D x={44} y={45} /></g>,
   <g><rect x="10" y="9" width="28" height="30" {...O} /><path d="M10 20c10-2 18 2 28 0M10 30c10 2 18-2 28 0M20 9c-3 10 3 20 0 30M30 9c3 10-3 20 0 30" stroke="#7a2008" strokeWidth="1.4" fill="none" />{[[10, 9], [20, 9], [30, 9], [39, 9], [10, 24], [24, 21], [39, 21], [10, 39], [24, 39], [39, 39]].map(([x, y], i) => <D key={i} x={x} y={y} r={2.8} />)}</g>],
  [<g><path d="M10 6c12 2 20 10 22 22l12-2-8 16H10z" {...O} /><D x={10} y={6} r={2.6} /><D x={32} y={28} r={2.6} /><D x={44} y={26} r={2.6} /><D x={10} y={42} r={2.6} /><D x={36} y={42} r={2.6} /></g>,
   <g><path d="M12 6c6 5-6 10 0 15s-6 10 0 21h24c-6-11 6-16 0-21s6-10 0-15z" {...O} />{[12, 24, 36].map(x => <path key={x} d={`M${x} 4c6 6-6 11 0 17s-6 11 0 22`} fill="none" stroke="#111" strokeWidth="2.6" />)}</g>],
  [<g><path d="M10 24L30 6l10 9-20 20z" {...O} /><ellipse cx="35" cy="10" rx="5" ry="8" fill="#f5a830" stroke="#7a2008" strokeWidth="1.4" transform="rotate(45 35 10)" /><line x1="42" y1="4" x2="34" y2="14" stroke="#111" strokeWidth="3" /><line x1="18" y1="28" x2="6" y2="42" stroke="#111" strokeWidth="4" /></g>,
   <g><path d="M8 42C10 24 24 6 42 6v18C30 24 22 32 20 42z" {...O} /><path d="M8 42C9 30 14 20 22 14l8-5 8-1-10 14C20 26 15 34 14 42z" fill="#111" opacity=".9" /><path d="M30 6l10-2-4 12z" fill="#111" /><path d="M20 42c2-8 8-16 22-18" stroke="#7a2008" strokeWidth="3" fill="none" /></g>],
];
const primitive: React.ReactNode[][] = [
  [<g><path d="M24 6l18 7v20L24 42 7 34V13z" fill="#e7bc3c" stroke="#6a1a08" strokeWidth="2" /><circle cx="24" cy="15" r="4" fill="#fff" stroke="#000" strokeWidth="2" /><circle cx="14" cy="26" r="3" fill="#fff" stroke="#000" /><circle cx="36" cy="24" r="3.4" fill="#fff" stroke="#000" /><circle cx="25" cy="32" r="3.4" fill="none" stroke="#6a1a08" /><circle cx="36" cy="14" r="2.4" fill="#fff" stroke="#000" /></g>,
   <g><path d="M6 18L26 6l17 8-3 13-19 11-15-13z" fill="url(#gY)" stroke="#7a2008" strokeWidth="1.8" /><path d="M6 18l16 9 21-13" fill="none" stroke="#b06010" /><rect x="24" y="24" width="18" height="18" fill="#fff" stroke="#333" strokeWidth="2.2" /><path d="M30 24v18M36 24v18M24 30h18M24 36h18" stroke="#666" strokeWidth="2" /></g>],
  [<g><path d="M10 9c0-6 28-6 28 0v28c0 6-28 6-28 0z" {...O} /><ellipse cx="24" cy="9" rx="14" ry="5" fill="#f3b03a" stroke="#7a2008" strokeWidth="1.6" /></g>,
   <g><circle cx="24" cy="24" r="16" {...O} /><path d="M24 8c-4 8-4 24 0 32M9 24c8 3 22 3 30 0" stroke="#b75a15" fill="none" /></g>],
];
const subd: React.ReactNode[][] = [
  [<g><path d="M10 7c8-3 20-3 28 0 6 8 6 26 0 34-8 3-20 3-28 0-6-8-6-26 0-34z" fill="url(#gSilver)" stroke="#777" strokeWidth="1.6" /><path d="M28 6c8 0 12 4 14 14 1 8 0 16-4 21-3 1-6 2-10 2-2-12-2-26 0-37z" fill="#e9a01c" stroke="#a3200a" strokeWidth="1.8" /><path d="M28 14h14M27 21h16M27 28h16M27 35h15M32 7v36M38 9v32" stroke="#a3200a" strokeWidth="2" /></g>,
   <g><path d="M10 8c8-3 20-3 28 0 6 9 6 24 0 33-8 3-20 3-28 0-6-9-6-24 0-33z" {...O} /><path d="M24 6v37M6 24h36" stroke="#6a1a08" strokeWidth="2.4" /></g>],
  [<g><path d="M6 10l12-4 6 18 16-8 5 10-21 10-6 10-9-5 6-10z" fill="#e7bc3c" stroke="#5a4a10" strokeWidth="1.4" /><path d="M10 18l12-3M12 25l10-3M24 24l6 8M32 20l4 8M16 34l6 3" stroke="#222" strokeWidth="1.4" /></g>,
   <g><path d="M6 32c0-8 8-10 14-12 4-8 12-14 20-13 5 6 5 15 2 22-5 2-9 3-12 8-6 5-14 7-19 4z" fill="#c9a52a" stroke="#3a2a0a" strokeWidth="1.8" /><path d="M14 20l16 22M22 14l16 24M32 8l10 20M7 28l30-8M8 36l34-20M13 41l18-8" stroke="#3a2a0a" strokeWidth="1.5" /></g>],
];
const util: React.ReactNode[][] = [
  [<g><path d="M14 6h32l-8 34H6z" {...O} />{[[16, 6], [30, 6], [44, 6], [6, 39], [20, 39], [36, 39], [12, 22], [26, 22], [40, 22]].map(([x, y], i) => <D key={i} x={x} y={y} r={2.6} />)}</g>,
   <g><path d="M14 6h30l-8 35H6z" {...O} /><Wd x={20} y={10} /><Wd x={38} y={10} /><Wd x={10} y={40} /><Wd x={32} y={40} /><path d="M14 24l6-1-2 6-6 1zM34 23l6-1-2 6-6 1z" fill="#fff" stroke="#000" strokeWidth="1.5" /></g>],
  [<g><rect x="4" y="12" width="40" height="24" fill="#f7e27a" /><rect x="8" y="10" width="13" height="28" {...O} /><rect x="27" y="10" width="13" height="28" {...O} /><path d="M4 24h14M44 24H30" stroke="#000" strokeWidth="2.2" /><path d="M14 20l4 4-4 4M34 20l-4 4 4 4" fill="none" stroke="#000" strokeWidth="2" /><path d="M19 2l2 5M24 0v6M29 2l-2 5M19 46l2-5M24 48v-6M29 46l-2-5" stroke="#c33" strokeWidth="1.6" /></g>,
   <g><path d="M10 10L26 4l12 7-14 9z" {...O} /><path d="M10 28l14-6 14 6v12l-14 6-14-6z" fill="url(#gSilver)" stroke="#777" strokeWidth="1.6" /><path d="M10 28l14 6 14-6M24 34v12" stroke="#999" fill="none" /></g>],
  [<g><rect x="12" y="8" width="26" height="26" fill="none" stroke="#bb2a12" strokeWidth="3" /><path d="M12 8v26" stroke="#777" strokeWidth="3" /><path d="M12 34h26v4" stroke="#777" strokeWidth="2" /><D x={12} y={8} r={3.4} /><D x={12} y={26} r={3.4} /><D x={40} y={42} r={3.4} /></g>,
   <g><path d="M24 3l18 12v20L22 46 7 36V14z" fill="url(#gY)" stroke="#7a2008" strokeWidth="2" /><path d="M18 18l8 16M18 18l1 6M18 18l5 2M26 34l-1-6M26 34l-5-2" stroke="#111" strokeWidth="1.6" fill="none" /></g>],
];

/* -------- bottles -------- */
type Bottle = {
  id: string; mx: number; my: number; rx: number; ry: number; ny: number;
  s0: number; s1: number; sy: number; b0: number; b1: number; by: number; tip: number;
  stripes?: [number, number, string][]; fill?: string; line: string; wall: string; floor: string;
};
const purple: [number, number, string][] = [[0, .2, '#2e0e58'], [.2, .5, '#3f0c5e'], [.5, .78, '#0a0ab4'], [.78, 1, '#531b7a']];
const maroon: [number, number, string][] = [[0, .2, '#581040'], [.2, .5, '#6e1040'], [.5, .78, '#0808b8'], [.78, 1, '#86235c']];

function outline(b: Bottle) {
  const cb = (b.b0 + b.b1) / 2;
  return `M${b.mx - b.rx} ${b.my} L${b.mx - b.rx + 3} ${b.ny} C${b.mx - b.rx - 2} ${b.ny + 10} ${b.s0} ${b.sy - 26} ${b.s0} ${b.sy}` +
    ` L${b.b0} ${b.by} C${b.b0 + 3} ${b.tip - 14} ${cb - 32} ${b.tip} ${cb} ${b.tip} C${cb + 32} ${b.tip} ${b.b1 - 3} ${b.tip - 14} ${b.b1} ${b.by}` +
    ` L${b.s1} ${b.sy} C${b.s1} ${b.sy - 26} ${b.mx + b.rx + 2} ${b.ny + 10} ${b.mx + b.rx - 3} ${b.ny} L${b.mx + b.rx} ${b.my} A${b.rx} ${b.ry} 0 0 0 ${b.mx - b.rx} ${b.my} Z`;
}

const BottleShape = ({ b }: { b: Bottle }) => {
  const d = outline(b);
  const sc = (b.s0 + b.s1) / 2;
  const top = b.sy - 130;
  const at = (f: number) => {
    const xb = b.b0 + (b.b1 - b.b0) * f;
    const xs = b.s0 + (b.s1 - b.s0) * f;
    const k = (xb - xs) / (b.by - b.sy);
    return { x0: xs - k * (b.sy - top), x1: xb + k * (b.tip + 10 - b.by) };
  };
  const shoulderArc = `M${b.s0} ${b.sy} C${b.s0 + 20} ${b.sy + 26} ${b.s1 - 20} ${b.sy + 26} ${b.s1} ${b.sy}`;
  return (
    <g>
      <clipPath id={b.id}><path d={d} /></clipPath>
      <clipPath id={`${b.id}m`}><ellipse cx={b.mx} cy={b.my} rx={b.rx - 3} ry={b.ry - 3} /></clipPath>
      <g clipPath={`url(#${b.id})`}>
        {b.fill && <path d={d} fill={b.fill} />}
        {b.stripes && b.stripes.map(([f0, f1, c], i) => {
          const a = at(f0); const z = at(f1);
          return <polygon key={i} points={`${a.x0},${top} ${z.x0},${top} ${z.x1},${b.tip + 10} ${a.x1},${b.tip + 10}`} fill={c} />;
        })}
        <path d={`M${b.s0} ${b.sy - 8} C${b.s0 + 18} ${b.sy + 20} ${b.s1 - 18} ${b.sy + 20} ${b.s1} ${b.sy - 8}`} stroke="rgba(255,255,255,.14)" strokeWidth="14" fill="none" />
        <ellipse cx={sc} cy={b.ny + 6} rx={b.rx + 6} ry={b.ry} fill="none" stroke={b.line} strokeWidth="1.2" opacity=".8" />
      </g>
      <g clipPath={`url(#${b.id}m)`}>
        <ellipse cx={b.mx} cy={b.my} rx={b.rx} ry={b.ry} fill={b.wall} />
        <ellipse cx={b.mx} cy={b.my + 26} rx={b.rx - 4} ry={b.ry - 4} fill={b.floor} stroke={b.line} strokeWidth="1.2" />
      </g>
      <path d={d} fill="none" stroke={b.line} strokeWidth="1.6" />
      <path d={shoulderArc} fill="none" stroke={b.line} strokeWidth="1.3" />
      <ellipse cx={b.mx} cy={b.my} rx={b.rx} ry={b.ry} fill="none" stroke={b.line} strokeWidth="1.8" />
      <ellipse cx={b.mx} cy={b.my} rx={b.rx - 5} ry={b.ry - 4} fill="none" stroke={b.line} strokeWidth="1.2" />
      {[.07, .26, .95].map(f => {
        const a = at(f);
        const x = a.x0 + (a.x1 - a.x0) * ((b.sy + 16 - top) / (b.tip + 10 - top));
        const x2 = a.x0 + (a.x1 - a.x0) * ((b.by + 22 - top) / (b.tip + 10 - top));
        return <line key={f} x1={x} y1={b.sy + 16} x2={x2} y2={b.by + 22} stroke={b.line} strokeWidth="1.4" />;
      })}
    </g>
  );
};

const red: Bottle = { id: 'bRed', mx: 1506, my: 963, rx: 45, ry: 27, ny: 985, s0: 1447, s1: 1577, sy: 1014, b0: 1471, b1: 1590, by: 1225, tip: 1262, fill: 'rgba(176,52,46,.84)', line: '#a23c36', wall: 'rgba(188,100,92,.9)', floor: 'rgba(172,70,62,.9)' };
const green: Bottle = { id: 'bGreen', mx: 1651, my: 1003, rx: 45, ry: 28, ny: 1026, s0: 1591, s1: 1717, sy: 1050, b0: 1610, b1: 1724, by: 1222, tip: 1260, fill: 'rgba(86,184,66,.9)', line: '#6fc95c', wall: 'rgba(110,180,96,.95)', floor: 'rgba(84,172,70,.9)' };
const botA: Bottle = { id: 'bA', mx: 1520, my: 1082, rx: 44, ry: 30, ny: 1110, s0: 1464, s1: 1586, sy: 1135, b0: 1487, b1: 1604, by: 1290, tip: 1333, stripes: maroon, line: '#2410e6', wall: '#7c1a62', floor: '#8a2468' };
const botC: Bottle = { id: 'bC', mx: 1704, my: 1141, rx: 45, ry: 29, ny: 1165, s0: 1645, s1: 1770, sy: 1196, b0: 1660, b1: 1780, by: 1344, tip: 1388, stripes: purple, line: '#2410e6', wall: '#2a12a8', floor: '#3b1490' };
const botD: Bottle = { id: 'bD', mx: 1922, my: 1202, rx: 45, ry: 30, ny: 1222, s0: 1859, s1: 1986, sy: 1244, b0: 1868, b1: 1988, by: 1409, tip: 1452, stripes: purple, line: '#2410e6', wall: '#2a12a8', floor: '#4a0e7c' };

const lerp = (a: number[], b: number[], t: number) => [a[0] + (b[0] - a[0]) * t, a[1] + (b[1] - a[1]) * t];
const PL = [1249, 1345], PT = [1457, 1044], PR = [1882, 1179], PB = [1674, 1480];
const GRID = 34;
const gridLines: string[] = [];
for (let i = 0; i <= GRID; i++) {
  const t = i / GRID;
  const a = lerp(PL, PT, t), b = lerp(PB, PR, t), c = lerp(PL, PB, t), d = lerp(PT, PR, t);
  gridLines.push(`M${a[0]} ${a[1]}L${b[0]} ${b[1]}M${c[0]} ${c[1]}L${d[0]} ${d[1]}`);
}

const ModelScene = () => (
  <Scene width="1460" height="1678" viewBox="604 258 1460 1678">
    <path d={gridLines.join('')} stroke="#767a80" strokeWidth="1" opacity=".8" fill="none" />
    <line x1="1518" y1="1332" x2="1458" y2="1411" stroke="#a8504c" strokeWidth="2" />
    <line x1="1604" y1="1269" x2="1782" y2="1323" stroke="#5fa45a" strokeWidth="2" />
    <BottleShape b={green} />
    <BottleShape b={red} />
    <BottleShape b={botA} />
    <g fill="none">
      <ellipse cx="1520" cy="1082" rx="40" ry="27" stroke="#94500f" strokeWidth="7" />
      <ellipse cx="1520" cy="1092" rx="40" ry="25" stroke="#7a4a10" strokeWidth="5" opacity=".65" />
      <path d="M1492 1060l6-14 32 8" stroke="#9a5f18" strokeWidth="8" />
    </g>
    <BottleShape b={botC} />
    <path d="M1659 1141C1659 1125 1680 1112 1704 1112L1719 1114L1719 1160L1683 1168L1683 1195L1657 1202L1665 1262L1651 1258L1645 1195C1648 1180 1655 1175 1659 1168Z" fill="rgba(62,150,115,.82)" />
    <ellipse cx="1704" cy="1141" rx="40" ry="25" fill="none" stroke="#5bb59a" strokeWidth="1.4" opacity=".7" />
    <BottleShape b={botD} />
    <g stroke="#5a5d63" strokeWidth="1.4" fill="none">
      <line x1="675" y1="1864" x2="675" y2="1817" />
      <line x1="675" y1="1864" x2="729" y2="1879" />
      <line x1="675" y1="1864" x2="650" y2="1900" />
    </g>
    <g fontFamily='"Liberation Sans", sans-serif' fontSize="27" fill="#5a5d63">
      <text x="679" y="1820">z</text>
      <text x="734" y="1878">y</text>
      <text x="654" y="1902">x</text>
    </g>
  </Scene>
);

const ghTabs: [string, number][] = [['Prm', 12], ['Math', 80], ['Set', 156], ['Vec', 216], ['Crv', 280], ['Msh', 394], ['Int', 463], ['Trns', 512], ['Dis', 581], ['Squid (ShapeDiver edition)', 640], ['PanelingTools', 940], ['Kangaroo2', 1108], ['Human', 1246], ['S', 1354]];
const rhinoTabs: [string, number][] = [['Standard', 127], ['CPlanes', 118], ['Set View', 124], ['Display', 112], ['Select', 102], ['Viewport Layout', 196], ['Visibility', 124], ['Transform', 139], ['Curve Tools', 152], ['Surface Tools', 169], ['Solid Tools', 145], ['SubD Tools', 145], ['Mesh Tools', 146], ['Render Tools', 164], ['Drafting', 120]];

const checks: [string, boolean, boolean?][] = [
  ['End', true], ['Near', false], ['Point', true], ['Midpoint', true], ['Center', true], ['Intersection', true], ['Perpendicular', true], ['Tangent', false], ['Quadrant', false], ['Knot', false], ['Vertex', false],
  ['On curve', false, true], ['On surface', false, true], ['On polysurface', false, true], ['On mesh', false, true], ['Project', false], ['SmartTrack', true],
];

const RibGroup = ({ w, title, cols }: { w: number; title: string; cols: React.ReactNode[][] }) => (
  <Group $w={w}>
    <GroupGrid>
      {cols.map((c, i) => (
        <GroupCol key={i}>
          <RibIcon viewBox="0 0 48 48"><g>{c[0]}</g></RibIcon>
          <RibIcon viewBox="0 0 48 48"><g>{c[1]}</g></RibIcon>
        </GroupCol>
      ))}
    </GroupGrid>
    <GroupCaption>{title}<Plus>+</Plus></GroupCaption>
  </Group>
);

const wire = '#55544f';

export default function App() {
  return (
    <Desktop>
      <Global />
      <Defs>
        <defs>
          <linearGradient id="gW" x1="0" y1="0" x2="1" y2="1"><stop offset="0" stopColor="#fff" /><stop offset="1" stopColor="#c9c9c9" /></linearGradient>
          <linearGradient id="gG" x1="0" y1="0" x2="0" y2="1"><stop offset="0" stopColor="#eee" /><stop offset="1" stopColor="#a8a8a8" /></linearGradient>
          <linearGradient id="gY" x1="0" y1="0" x2="0" y2="1"><stop offset="0" stopColor="#fbe79b" /><stop offset="1" stopColor="#eebf45" /></linearGradient>
          <linearGradient id="gBl" x1="0" y1="0" x2="1" y2="1"><stop offset="0" stopColor="#c4cef8" /><stop offset="1" stopColor="#4f6ce0" /></linearGradient>
          <radialGradient id="gSph" cx=".35" cy=".3"><stop offset="0" stopColor="#bcc8f6" /><stop offset="1" stopColor="#3c55c2" /></radialGradient>
          <radialGradient id="gBall" cx=".5" cy=".3"><stop offset="0" stopColor="#fff" /><stop offset="1" stopColor="#8a8a8a" /></radialGradient>
          <radialGradient id="gBlue" cx=".35" cy=".3"><stop offset="0" stopColor="#5f7fe6" /><stop offset=".7" stopColor="#1d36b0" /><stop offset="1" stopColor="#0c1e7e" /></radialGradient>
          <linearGradient id="gCone" x1="0" y1="0" x2="1" y2="0"><stop offset="0" stopColor="#fff" /><stop offset=".5" stopColor="#f6a63c" /><stop offset="1" stopColor="#e8862a" /></linearGradient>
          <radialGradient id="gGlobe" cx=".6" cy=".4"><stop offset="0" stopColor="#b5ec62" /><stop offset="1" stopColor="#3b8a14" /></radialGradient>
          <linearGradient id="gFire" x1="0" y1="1" x2="1" y2="0"><stop offset="0" stopColor="#f8c64a" /><stop offset="1" stopColor="#e14a22" /></linearGradient>
          <linearGradient id="gO" x1="0" y1="0" x2="1" y2="1"><stop offset="0" stopColor="#f8c23f" /><stop offset="1" stopColor="#ec7a20" /></linearGradient>
          <linearGradient id="gSilver" x1="0" y1="0" x2="1" y2="1"><stop offset="0" stopColor="#f2f2f2" /><stop offset=".55" stopColor="#b8b8b8" /><stop offset="1" stopColor="#8a8a8a" /></linearGradient>
          <linearGradient id="gVis" x1="0" y1="0" x2="1" y2="1"><stop offset="0" stopColor="#f0205a" /><stop offset=".5" stopColor="#6d58e0" /><stop offset="1" stopColor="#55c4f5" /></linearGradient>
          <linearGradient id="wG1" gradientUnits="userSpaceOnUse" x1="3035" x2="3204" y1="830" y2="830"><stop offset="0" stopColor="#a9a99f" /><stop offset="1" stopColor="#8ec454" /></linearGradient>
          <linearGradient id="wG2" gradientUnits="userSpaceOnUse" x1="3130" x2="3130" y1="1144" y2="870"><stop offset="0" stopColor="#a9a99f" /><stop offset=".45" stopColor="#a3ab8f" /><stop offset="1" stopColor="#92c955" /></linearGradient>
          <radialGradient id="gCmp"><stop offset="0" stopColor="#d8d8d8" /><stop offset="1" stopColor="#8c8c8c" /></radialGradient>
        </defs>
      </Defs>

      <RhinoWindow>
        <TitleBar>
          <TitleTop>
            <Light $c="#ee6a5f"><CloseDot /></Light>
            <Light $c="#f5bd4f" />
            <Light $c="#61c454" />
            <DocIcon width="24" height="32" viewBox="0 0 24 32"><path d="M1 1h16l6 6v24H1z" fill="#fafafa" stroke="#bbb" /><path d="M6 4l6 6 4 2 3 6-4 2-3 2-4-6-4-6z" fill="#222" /></DocIcon>
            <DocName>bottle.3dm</DocName>
            <DocDash>—</DocDash>
            <DocState>Edited</DocState>
          </TitleTop>
          <TitleTools>
            <SideToggle />
            {[['Grid Snap', 161, 1], ['Ortho', 119, 1], ['Planar', 117, 0], ['SmartTrack', 183, 1], ['Gumball', 139, 0], ['History', 128, 0]].map(([t, w, on]) => (
              <Pill key={t as string} $w={w as number} $on={!!on}>{t}</Pill>
            ))}
            <FilterIcon width="44" height="42" viewBox="0 0 44 42">
              <path d="M8 6c0-4 28-4 28 0l-9 16v15c0 3-6 3-6 0V22z" fill="none" stroke="#555" strokeWidth="2" />
              <ellipse cx="22" cy="6" rx="14" ry="3" fill="none" stroke="#555" strokeWidth="2" />
              <path d="M36 1h7v8M1 32v8h7" fill="none" stroke="#333" strokeWidth="2" />
            </FilterIcon>
            <SnapIcon width="38" height="38" viewBox="0 0 38 38"><circle cx="19" cy="19" r="17" fill="none" stroke="#8d8d8d" strokeWidth="2" /><rect x="15" y="16" width="7" height="7" fill="#666" /><line x1="19" y1="19" x2="37" y2="19" stroke="#666" strokeWidth="2.4" /></SnapIcon>
          </TitleTools>
        </TitleBar>
        <TabStrip>
          {rhinoTabs.map(([t, w], i) => <Tab key={i} $w={w} $on={i === 0}>{t}</Tab>)}
        </TabStrip>
        <IconRow>
          {topIcons.map((ic, i) => <Cell key={i}><svg width="60" height="60" viewBox="0 0 60 60">{ic}</svg></Cell>)}
        </IconRow>
        <Body>
          <Sidebar>
            <SideStrip />
            <SideTop>
              <Command>Command</Command>
              <ToolGrid>
                {toolIcons.map((ic, i) => <Cell key={i}><svg width="60" height="60" viewBox="0 0 60 60">{ic}</svg></Cell>)}
              </ToolGrid>
            </SideTop>
            <Options>
              <RadioRow><Radio $on />Persistent</RadioRow>
              <RadioRow><Radio />One shot</RadioRow>
              <CheckList>
                {checks.map(([t, on, dim]) => (
                  <CheckRow key={t} $dim={dim}>
                    <Box $on={on} $dim={dim}>{on && <svg width="18" height="14" viewBox="0 0 18 14"><path d="M2 7l5 5 9-10" fill="none" stroke="#fff" strokeWidth="3" /></svg>}</Box>{t}
                  </CheckRow>
                ))}
                <CheckRow $gap><Box />Disable all</CheckRow>
              </CheckList>
            </Options>
          </Sidebar>
          <ViewColumn>
            <ViewTabs>
              <ViewIcon width="30" height="28" viewBox="0 0 30 28"><path d="M1 1h28v26H1zM15 1v26M1 14h28" fill="#eee" stroke="#8d8d8d" strokeWidth="1.6" /></ViewIcon>
              <ViewIcon $ml={34} width="30" height="28" viewBox="0 0 30 28"><rect x="1" y="1" width="28" height="26" fill="#f4f6fb" stroke="#4d8bee" strokeWidth="1.6" /></ViewIcon>
              <Sep $ml={29} />
              <ViewTab $on $w={220}>Perspective</ViewTab><Sep />
              <ViewTab $w={121}>Top</ViewTab><Sep />
              <ViewTab $w={143}>Front</ViewTab><Sep />
              <ViewTab $w={142}>Right</ViewTab><Sep />
              <ViewTab $w={196}>Layouts...</ViewTab>
            </ViewTabs>
            <Viewport>
              <ModelScene />
              <ViewLabel>Perspective</ViewLabel>
            </Viewport>
          </ViewColumn>
        </Body>
        <StatusBar>
          <svg width="26" height="24" viewBox="0 0 26 24"><path d="M0 3h2M6 3h20M0 12h2M6 12h20M0 21h2M6 21h20" stroke="#666" strokeWidth="2.4" /></svg>
          <StatusMsg>1 curve, 3 polysurfaces added to selection.</StatusMsg>
          <Units>Millimeters</Units>
          <PlaneSelect>CPlane<svg width="10" height="24" viewBox="0 0 10 24"><path d="M1 8l4-5 4 5M1 16l4 5 4-5" fill="none" stroke="#777" strokeWidth="1.6" /></svg></PlaneSelect>
          <Coord $ml={29}>X: -152.113</Coord>
          <Coord $ml={49}>Y: 1188.426</Coord>
          <Coord $ml={51}>Z: 0.000</Coord>
        </StatusBar>
      </RhinoWindow>

      <GHWindow>
        <GHTitle>
          <Light $c="#cfcfcf" $b="#bdbdbd" />
          <Light $c="#cfcfcf" $b="#bdbdbd" />
          <Light $c="#cfcfcf" $b="#bdbdbd" />
          <GHName>Grasshopper - unnamed</GHName>
        </GHTitle>
        <GHTabs>
          {ghTabs.map(([t, x]) => <GHTab key={t} $x={x}>{t}</GHTab>)}
          <GHActive>Srf</GHActive>
        </GHTabs>
        <Ribbon>
          <RibGroup w={369} title="Analysis" cols={analysis} />
          <RibGroup w={216} title="Freeform" cols={freeform} />
          <RibGroup w={141} title="Primitive" cols={primitive} />
          <RibGroup w={141} title="SubD" cols={subd} />
          <RibGroup w={216} title="Util" cols={util} />
        </Ribbon>
        <GHBar>
          <TBtn $w={50}><svg width="34" height="36" viewBox="0 0 34 36"><path d="M6 2h10l2 4h10v28H6z" fill="#7cc668" stroke="#bbb" /><path d="M14 2v8" stroke="#ccc" /></svg></TBtn>
          <TBtn $w={50} $ml={5}><svg width="34" height="36" viewBox="0 0 34 36"><path d="M3 2h28v32H3z" fill="#3f7fe0" /><rect x="9" y="4" width="16" height="12" fill="#a8cdf5" /><rect x="10" y="22" width="14" height="12" fill="#e8eef8" /></svg></TBtn>
          <Combo>100%<ComboArrow><svg width="14" height="10" viewBox="0 0 14 10"><path d="M2 2l5 6 5-6" fill="none" stroke="#222" strokeWidth="2" /></svg></ComboArrow></Combo>
          <TBtn $w={61} $ml={6}><svg width="30" height="32" viewBox="0 0 30 32"><path d="M1 10V1h9M20 1h9v9M1 22v9h9M29 22v9h-9" fill="none" stroke="#111" strokeWidth="4" /><rect x="11" y="12" width="8" height="8" fill="#111" /></svg></TBtn>
          <TBtn $w={64} $ml={24}><svg width="30" height="30" viewBox="0 0 30 30"><ellipse cx="15" cy="15" rx="13" ry="13" fill="#c8d2da" stroke="#8f9aa0" /><circle cx="15" cy="15" r="8" fill="#2d86c6" /><circle cx="15" cy="15" r="3.4" fill="#10283a" /></svg></TBtn>
          <TBtn $w={52} $ml={20}><svg width="30" height="34" viewBox="0 0 30 34"><path d="M6 30c-4-10 2-18 8-20 0-3 8-8 10-8-3 6 3 12 0 20-3 8-10 12-18 8z" fill="#d94c32" /><path d="M10 30c0-6 4-8 5-14 3 6 1 12-5 14z" fill="#111" opacity=".7" /></svg></TBtn>
          <TBtn $w={52} $ml={454}><svg width="28" height="36" viewBox="0 0 28 36"><path d="M14 2l8 7-3 9h-10l-3-9z" fill="#e8e8e8" stroke="#999" /><ellipse cx="14" cy="25" rx="11" ry="6" fill="#333" /></svg></TBtn>
          <TBtn $w={52} $ml={2}><svg width="32" height="34" viewBox="0 0 32 34"><path d="M14 2l16 13-12 17L2 19z" fill="#eee" stroke="#999" strokeWidth="2" /><path d="M11 10l10 9M8 15l10 9" stroke="#999" strokeWidth="2" /></svg></TBtn>
          <TBtn $w={52} $ml={2} $press><svg width="32" height="34" viewBox="0 0 32 34"><path d="M18 3l11 9-11 19L3 20z" fill="#c42a1c" /><ellipse cx="18" cy="13" rx="4" ry="5" fill="#7a1208" /></svg></TBtn>
          <BarSep $ml={14} $mr={14} />
          <TBtn $w={52}><svg width="32" height="34" viewBox="0 0 32 34"><path d="M12 2l16 14-6 12-10 4-6-8 3-8z" fill="#2a9aa0" /><path d="M8 4l8 10M4 26l18 6" stroke="#555" strokeWidth="1.4" /></svg></TBtn>
          <TBtn $w={52}><svg width="32" height="34" viewBox="0 0 32 34"><path d="M16 2l14 12-8 8-12-10z" fill="#5aa21e" /><path d="M2 20l6-6 14 12-6 6z" fill="#cfcfcf" stroke="#999" /></svg></TBtn>
          <TBtn $w={52}><svg width="32" height="34" viewBox="0 0 32 34"><circle cx="16" cy="17" r="14" fill="#ddd" stroke="#aaa" /><path d="M16 3a14 14 0 0 0 0 28z" fill="#e08a2e" /></svg></TBtn>
          <BarSep $ml={2} $mr={4} />
          <TBtn $w={64}><svg width="28" height="28" viewBox="0 0 28 28"><circle cx="14" cy="14" r="12" fill="#8cc0f5" stroke="#3a5aa8" strokeWidth="2" /></svg></TBtn>
        </GHBar>
        <Canvas>
          <Margin />
          <TopMargin />
          <Wires width="1392" height="1562" viewBox="2064 334 1392 1562" fill="none">
            <path d="M2475 821C2640 821 2740 830 2906 830" stroke={wire} strokeWidth="6" />
            <path d="M2497 1136C2540 1136 2548 1090 2552 1040C2556 990 2575 978 2600 978" stroke={wire} strokeWidth="5" />
            <path d="M2497 1136C2640 1136 2780 1145 2925 1145" stroke={wire} strokeWidth="6" />
            <path d="M2722 978C2800 978 2820 870 2906 870" stroke={wire} strokeWidth="5" />
            <path d="M3035 830C3100 830 3140 830 3204 830" stroke="url(#wG1)" strokeWidth="6" />
            <path d="M3050 1145C3100 1145 3125 1120 3130 1040C3132 970 3120 940 3122 920C3126 890 3160 870 3204 870" stroke="url(#wG2)" strokeWidth="5" />
          </Wires>

          <Node $x={2529} $y={594} $w={100} $h={42} $kind="white"><ParamLabel>Brep</ParamLabel><Grip $side="l" $y="50%" /><Grip $side="r" $y="50%" /></Node>
          <Node $x={2368} $y={799} $w={100} $h={42} $kind="white"><ParamLabel>Brep</ParamLabel><Grip $side="l" $y="50%" /><Grip $side="r" $y="50%" /></Node>
          <Node $x={2912} $y={805} $w={115} $h={90} $kind="white">
            <Grip $side="l" $y="27%" /><Grip $side="l" $y="72%" /><Grip $side="r" $y="27%" /><Grip $side="r" $y="72%" />
            <Ports><span>G</span><span>T</span></Ports><Capsule><MoveText>Move</MoveText></Capsule><Ports><span>G</span><span>X</span></Ports>
          </Node>
          <Node $x={3210} $y={805} $w={115} $h={90} $kind="green">
            <Grip $side="l" $y="27%" /><Grip $side="l" $y="72%" /><Grip $side="r" $y="27%" /><Grip $side="r" $y="72%" />
            <Ports><span>G</span><span>T</span></Ports><Capsule $green><MoveText>Move</MoveText></Capsule><Ports><span>G</span><span>X</span></Ports>
          </Node>
          <Node $x={2607} $y={949} $w={109} $h={58} $kind="gray">
            <Grip $side="l" $y="50%" /><Grip $side="r" $y="50%" />
            <Ports><span>F</span></Ports><Capsule><LetterText>N</LetterText></Capsule><Ports><span>V</span></Ports>
          </Node>
          <Node $x={2933} $y={1115} $w={109} $h={58} $kind="gray">
            <Grip $side="l" $y="50%" /><Grip $side="r" $y="50%" />
            <Ports><span>F</span></Ports><Capsule><LetterTurn>Y</LetterTurn></Capsule><Ports><span>V</span></Ports>
          </Node>
          <Node $x={2171} $y={1115} $w={319} $h={42} $kind="white">
            <Grip $side="r" $y="50%" />
            <SliderLabel>Factor</SliderLabel>
            <SliderTrack>
              <Ticks width="205" height="16" viewBox="0 0 205 16"><path d="M1 0v15M21 8v7M41 8v7M61 8v7M81 8v7M101 4v11M121 8v7M141 8v7M161 8v7M181 8v7M203 0v15M1 15h202" stroke="#bdbdbb" strokeWidth="2" fill="none" /></Ticks>
              <SliderValue><svg width="14" height="22" viewBox="0 0 14 22"><path d="M7 1l6 10-6 10-6-10z" fill="#fff" stroke="#000" strokeWidth="2" /></svg>129</SliderValue>
            </SliderTrack>
          </Node>

          <Widget><svg width="36" height="44" viewBox="0 0 36 44"><rect x="2" y="2" width="32" height="40" rx="9" fill="#c8c8c8" stroke="#111" strokeWidth="3.5" /><rect x="9" y="11" width="18" height="22" fill="#f2a838" stroke="#b5261a" strokeWidth="2" /><path d="M18 11v10h9" fill="#fff" stroke="#b5261a" strokeWidth="2" /></svg></Widget>
          <Compass width="100" height="100" viewBox="0 0 100 100">
            <circle cx="50" cy="56" r="39" fill="url(#gCmp)" stroke="#000" strokeWidth="2.4" />
            <circle cx="50" cy="56" r="37" fill="none" stroke="#fff" strokeWidth="2.4" />
            <path d="M24 28l14 10-8 6zM76 28l-14 10 8 6zM24 84l14-10-8-6zM76 84l-14-10 8-6z" fill="#fff" />
            <path d="M6 2l3 14 8-4 8-3 2 6-12 10-4 8-3-4 3-10z" fill="#000" />
          </Compass>
        </Canvas>
        <GHStatus>
          <svg width="30" height="32" viewBox="0 0 30 32"><ellipse cx="15" cy="16" rx="14" ry="15" fill="#2442a8" stroke="#142a7a" /><ellipse cx="15" cy="16" rx="8" ry="13" fill="#5a82d8" /><rect x="13" y="6" width="4" height="12" fill="#fff" /><rect x="13" y="21" width="4" height="5" fill="#fff" /></svg>
          <GHMessage>Autosave complete (3 seconds ago)</GHMessage>
          <GHVersion>1.0.0007</GHVersion>
        </GHStatus>
      </GHWindow>
    </Desktop>
  );
}
